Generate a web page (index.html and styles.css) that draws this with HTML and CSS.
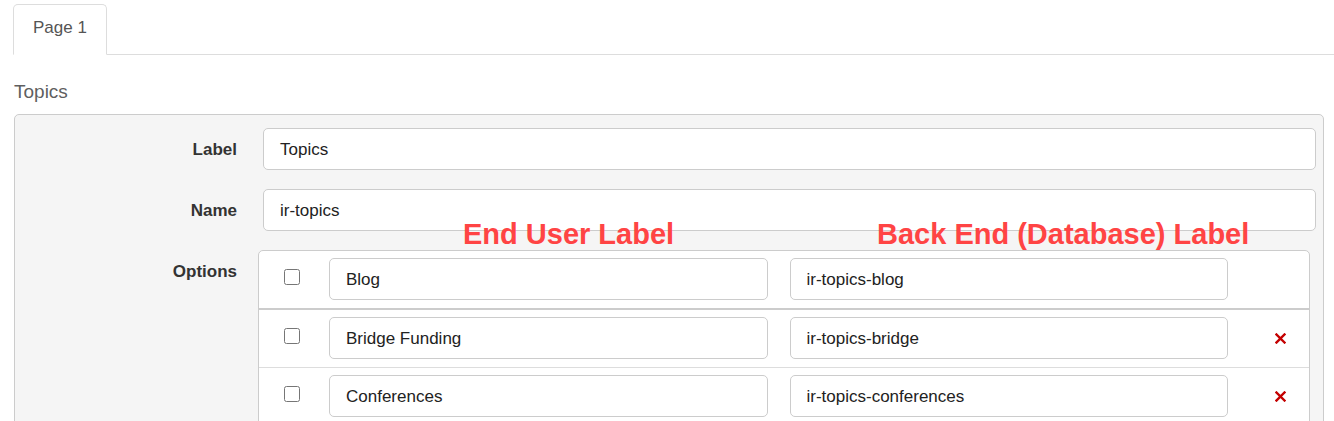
FILE: index.html
```html
<!DOCTYPE html>
<html lang="en">
<head>
<meta charset="utf-8">
<title>Topics</title>
<link rel="stylesheet" href="styles.css">
</head>
<body>
<div class="page">
  <ul class="tabs">
    <li class="tab">Page 1</li>
  </ul>
  <div class="content">
    <h3 class="section-title">Topics</h3>
    <div class="panel">
      <div class="form-row">
        <div class="row-label">Label</div>
        <div class="text-input field">Topics</div>
      </div>
      <div class="form-row">
        <div class="row-label">Name</div>
        <div class="text-input field">ir-topics</div>
      </div>
      <div class="form-row options-row">
        <div class="row-label">Options</div>
        <div class="options-table">
          <div class="opt-row opt-row-first">
            <div class="check-cell"><input type="checkbox" class="check"></div>
            <div class="text-input opt-input">Blog</div>
            <div class="text-input opt-input">ir-topics-blog</div>
            <div class="del-cell"></div>
          </div>
          <div class="opt-row">
            <div class="check-cell"><input type="checkbox" class="check"></div>
            <div class="text-input opt-input">Bridge Funding</div>
            <div class="text-input opt-input">ir-topics-bridge</div>
            <div class="del-cell"><svg class="del-icon" width="11" height="11" viewBox="0 0 11 11"><path d="M1.5 1.5 L9.5 9.5 M9.5 1.5 L1.5 9.5" stroke="#c40000" stroke-width="2.4" stroke-linecap="square"/></svg></div>
          </div>
          <div class="opt-row">
            <div class="check-cell"><input type="checkbox" class="check"></div>
            <div class="text-input opt-input">Conferences</div>
            <div class="text-input opt-input">ir-topics-conferences</div>
            <div class="del-cell"><svg class="del-icon" width="11" height="11" viewBox="0 0 11 11"><path d="M1.5 1.5 L9.5 9.5 M9.5 1.5 L1.5 9.5" stroke="#c40000" stroke-width="2.4" stroke-linecap="square"/></svg></div>
          </div>
        </div>
      </div>
      <div class="note note-user">End User Label</div>
      <div class="note note-db">Back End (Database) Label</div>
    </div>
  </div>
</div>
</body>
</html>
```
FILE: styles.css
```css
html, body {
  margin: 0;
  padding: 0;
  background: #fff;
}
body {
  font-family: "Liberation Sans", Arial, sans-serif;
  font-size: 17px;
  color: #333;
}
.page {
  padding-top: 4px;
}
.tabs {
  list-style: none;
  margin: 0 0 0 13px;
  padding: 0;
  display: flex;
  border-bottom: 1px solid #ddd;
}
.tab {
  margin-bottom: -1px;
  padding: 11px 19px 14px 19px;
  line-height: 24px;
  font-size: 17px;
  color: #555;
  background: #fff;
  border: 1px solid #ddd;
  border-bottom-color: #fff;
  border-radius: 5px 5px 0 0;
}
.content {
  margin: 0 10px 0 14px;
}
.section-title {
  margin: 26px 0 11px 0;
  font-size: 19px;
  line-height: 22px;
  font-weight: normal;
  color: #5f5f5f;
}
.panel {
  position: relative;
  background: #f5f5f5;
  border: 1px solid #ccc;
  border-radius: 5px;
  padding: 13px 7px 20px 0;
}
.form-row {
  display: flex;
  align-items: flex-start;
  margin-bottom: 19px;
}
.options-row {
  margin-top: 1px;
}
.row-label {
  flex: 0 0 222px;
  text-align: right;
  padding-top: 10px;
  line-height: 24px;
  font-weight: bold;
  color: #333;
}
.text-input {
  box-sizing: border-box;
  height: 42px;
  line-height: 38px;
  padding: 2px 16px 0 16px;
  background: #fff;
  border: 1px solid #ccc;
  border-radius: 5px;
  color: #222;
  font-size: 17px;
  white-space: nowrap;
  overflow: hidden;
}
.field {
  flex: 1;
  margin-left: 26px;
}
.options-table {
  flex: 1;
  margin-left: 21px;
  margin-right: 6px;
  background: #fff;
  border: 1px solid #ccc;
  border-radius: 5px;
}
.opt-row {
  display: flex;
  align-items: center;
  padding: 7px 0 8px 0;
  border-top: 1px solid #ddd;
}
.opt-row-first {
  border-top: none;
  border-bottom: 2px solid #ccc;
}
.opt-row-first + .opt-row {
  border-top: none;
}
.check-cell {
  flex: 0 0 70px;
  display: flex;
  align-items: center;
}
.check {
  width: 16px;
  height: 16px;
  margin: 0 0 4px 25px;
}
.opt-input {
  flex: 1;
}
.opt-input + .opt-input {
  margin-left: 22px;
}
.del-cell {
  flex: 0 0 81px;
  display: flex;
  justify-content: flex-start;
  align-items: center;
}
.del-icon {
  margin-left: 47px;
  margin-top: 1px;
}
.note {
  position: absolute;
  top: 105px;
  font-size: 29px;
  line-height: 29px;
  font-weight: bold;
  color: #ff4444;
  white-space: nowrap;
}
.note-user {
  left: 448px;
}
.note-db {
  left: 862px;
}
```
